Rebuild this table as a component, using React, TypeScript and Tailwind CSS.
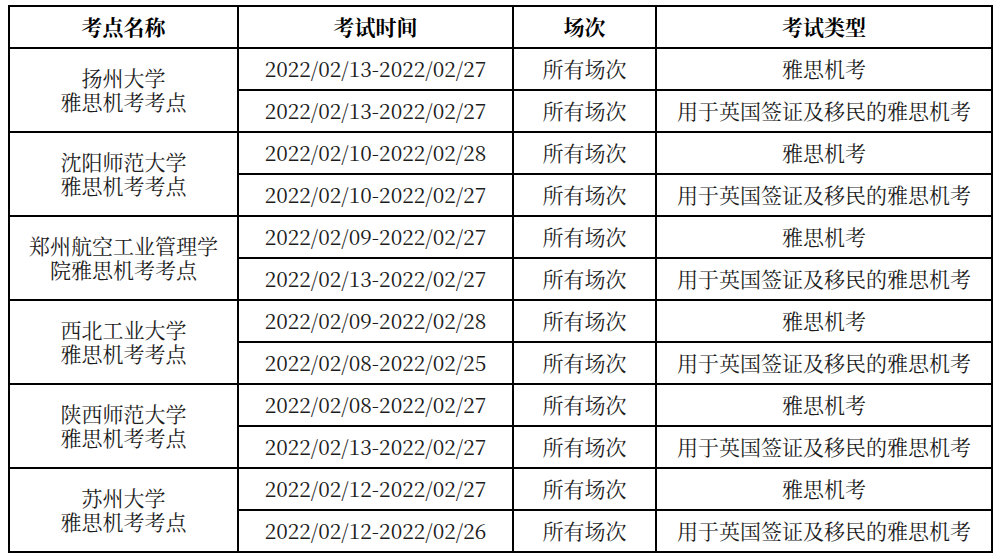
const rows = [
  {
    name: ['扬州大学', '雅思机考考点'],
    items: [
      ['2022/02/13-2022/02/27', '雅思机考'],
      ['2022/02/13-2022/02/27', '用于英国签证及移民的雅思机考'],
    ],
  },
  {
    name: ['沈阳师范大学', '雅思机考考点'],
    items: [
      ['2022/02/10-2022/02/28', '雅思机考'],
      ['2022/02/10-2022/02/27', '用于英国签证及移民的雅思机考'],
    ],
  },
  {
    name: ['郑州航空工业管理学', '院雅思机考考点'],
    items: [
      ['2022/02/09-2022/02/27', '雅思机考'],
      ['2022/02/13-2022/02/27', '用于英国签证及移民的雅思机考'],
    ],
  },
  {
    name: ['西北工业大学', '雅思机考考点'],
    items: [
      ['2022/02/09-2022/02/28', '雅思机考'],
      ['2022/02/08-2022/02/25', '用于英国签证及移民的雅思机考'],
    ],
  },
  {
    name: ['陕西师范大学', '雅思机考考点'],
    items: [
      ['2022/02/08-2022/02/27', '雅思机考'],
      ['2022/02/13-2022/02/27', '用于英国签证及移民的雅思机考'],
    ],
  },
  {
    name: ['苏州大学', '雅思机考考点'],
    items: [
      ['2022/02/12-2022/02/27', '雅思机考'],
      ['2022/02/12-2022/02/26', '用于英国签证及移民的雅思机考'],
    ],
  },
];

const cell = 'border-2 border-black h-[42px] p-0 pb-[2px] text-center align-middle';
const song =
  "font-['Noto_Serif_CJK_SC','Liberation_Serif','Noto_Sans_CJK_SC',serif]";

export default function App() {
  return (
    <div className="min-h-[559px] w-[995px] bg-white pl-[8px] pt-[5px]">
      <table
        className={`w-[983px] table-fixed border-collapse text-[21px] leading-[24px] text-[#1c1c1c] ${song}`}
      >
        <colgroup>
          <col className="w-[229px]" />
          <col className="w-[275px]" />
          <col className="w-[143px]" />
          <col className="w-[336px]" />
        </colgroup>
        <thead>
          <tr className="font-bold text-black">
            <th className={cell}>考点名称</th>
            <th className={cell}>考试时间</th>
            <th className={cell}>场次</th>
            <th className={cell}>考试类型</th>
          </tr>
        </thead>
        <tbody>
          {rows.map((g) =>
            g.items.map(([date, kind], i) => (
              <tr key={g.name.join('') + i}>
                {i === 0 && (
                  <td rowSpan={2} className={cell}>
                    {g.name[0]}
                    <br />
                    {g.name[1]}
                  </td>
                )}
                <td className={cell}>{date}</td>
                <td className={cell}>所有场次</td>
                <td className={cell}>{kind}</td>
              </tr>
            )),
          )}
        </tbody>
      </table>
    </div>
  );
}
